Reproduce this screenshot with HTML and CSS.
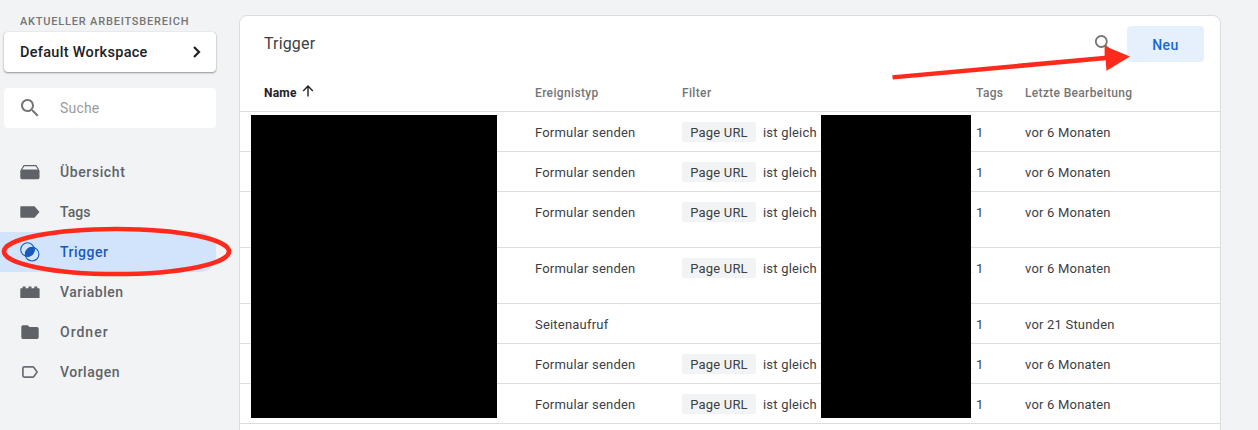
FILE: index.html
```html
<!DOCTYPE html>
<html lang="de">
<head>
<meta charset="utf-8">
<title>Trigger</title>
<link rel="stylesheet" href="styles.css">
</head>
<body>
<div class="app">
  <aside class="sidebar">
    <div class="workspace-label">AKTUELLER ARBEITSBEREICH</div>
    <div class="workspace">
      <span class="workspace-name">Default Workspace</span>
      <svg class="chevron" width="10" height="14" viewBox="0 0 10 14"><path d="M2 2l5 5-5 5" fill="none" stroke="#202124" stroke-width="2.2"/></svg>
    </div>
    <div class="search">
      <svg width="24" height="24" viewBox="0 0 24 24"><path fill="#757575" d="M15.5 14h-.79l-.28-.27C15.41 12.59 16 11.11 16 9.5 16 5.91 13.09 3 9.5 3S3 5.91 3 9.5 5.91 16 9.5 16c1.61 0 3.09-.59 4.23-1.57l.27.28v.79l5 4.99L20.49 19l-4.99-5zm-6 0C7.01 14 5 11.99 5 9.5S7.01 5 9.5 5 14 7.01 14 9.5 11.99 14 9.5 14z"/></svg>
      <span class="search-text">Suche</span>
    </div>
    <nav class="nav">
      <a class="nav-item"><svg class="icon" viewBox="0 0 20 20"><path d="M1.2 8L4 3.6h12L18.8 8" fill="none" stroke="#5f6368" stroke-width="1.1"/><rect x=".3" y="7.6" width="19.2" height="9.6" rx="1.6" fill="#5f6368"/></svg><span class="t-overview">Übersicht</span></a>
      <a class="nav-item"><svg class="icon" viewBox="0 0 20 20"><path d="M1.3 4.3h13.2l5 5.7-5 5.8H1.3a1 1 0 0 1-1-1V5.3a1 1 0 0 1 1-1z" fill="#5f6368"/></svg><span class="t-tags">Tags</span></a>
      <a class="nav-item active"><svg class="icon" viewBox="0 0 20 20"><g fill="none" stroke="#185abc" stroke-width="1.1"><circle cx="7.5" cy="7.6" r="6.8"/><circle cx="12.1" cy="12.2" r="6.8"/></g><path d="M14 5.700A6.800 6.800 0 0 1 5.600 14.100 6.800 6.800 0 0 1 14 5.700z" fill="#185abc" stroke="#185abc" stroke-width="1"/></svg><span class="t-trigger">Trigger</span></a>
      <a class="nav-item"><svg class="icon" viewBox="0 0 20 20"><path d="M1 6.3h1.6V4.5h3v1.8H8.500V4.500h3v1.800h2.800V4.500h3v1.800H19a.6.6 0 0 1 .6.6v8.500a.6.6 0 0 1-.6.6H.9a.6.6 0 0 1-.6-.6V6.900a.6.6 0 0 1 .7-.6z" fill="#5f6368"/></svg><span class="t-vars">Variablen</span></a>
      <a class="nav-item"><svg class="icon" viewBox="0 0 20 20"><path d="M3 3.300h4.800l1.800 1.700H17a1.700 1.700 0 0 1 1.700 1.700v8.500A1.700 1.700 0 0 1 17 16.900H3a1.700 1.700 0 0 1-1.700-1.700V5A1.700 1.700 0 0 1 3 3.300z" fill="#5f6368"/></svg><span class="t-folder">Ordner</span></a>
      <a class="nav-item"><svg class="icon" viewBox="0 0 20 20"><path d="M4.200 4.900h8.300q.9 0 1.400.7l3.200 4.400-3.200 4.400q-.5.700-1.400.7H4.200q-1.300 0-1.300-1.300V6.200q0-1.300 1.300-1.300z" fill="none" stroke="#6b6e76" stroke-width="1.700"/></svg><span class="t-tpl">Vorlagen</span></a>
    </nav>
  </aside>
  <main class="card">
    <header class="card-head">
      <h1 class="title">Trigger</h1>
      <div class="actions">
        <svg width="20" height="20" viewBox="0 0 20 20"><circle cx="8.300" cy="7.500" r="5.500" fill="none" stroke="#757575" stroke-width="1.800"/><path d="M12.200 11.500l5 5" stroke="#757575" stroke-width="2"/></svg>
        <button class="new">Neu</button>
      </div>
    </header>
    <div class="row heading">
      <span class="name">Name <svg class="sort" width="12" height="12" viewBox="0 0 12 12"><path d="M6 11.500V1.300M1.200 5.900L6 1.100l4.800 4.800" fill="none" stroke="#202124" stroke-width="1.400"/></svg></span>
      <span>Ereignistyp</span><span>Filter</span><span>Tags</span><span class="h-date">Letzte Bearbeitung</span>
    </div>
    <div class="row"><span></span><span>Formular senden</span><span class="filter"><b class="chip">Page URL</b>ist gleich<i class="more">…</i></span><span>1</span><span>vor 6 Monaten</span></div>
    <div class="row"><span></span><span>Formular senden</span><span class="filter"><b class="chip">Page URL</b>ist gleich<i class="more">…</i></span><span>1</span><span>vor 6 Monaten</span></div>
    <div class="row tall"><span></span><span>Formular senden</span><span class="filter"><b class="chip">Page URL</b>ist gleich<i class="more">…</i></span><span>1</span><span>vor 6 Monaten</span></div>
    <div class="row tall"><span></span><span>Formular senden</span><span class="filter"><b class="chip">Page URL</b>ist gleich<i class="more">…</i></span><span>1</span><span>vor 6 Monaten</span></div>
    <div class="row"><span></span><span>Seitenaufruf</span><span></span><span>1</span><span>vor 21 Stunden</span></div>
    <div class="row"><span></span><span>Formular senden</span><span class="filter"><b class="chip">Page URL</b>ist gleich<i class="more">…</i></span><span>1</span><span>vor 6 Monaten</span></div>
    <div class="row"><span></span><span>Formular senden</span><span class="filter"><b class="chip">Page URL</b>ist gleich<i class="more">…</i></span><span>1</span><span>vor 6 Monaten</span></div>
    <div class="row"></div>
  </main>
  <div class="redaction redaction-name"></div>
  <div class="redaction redaction-value"></div>
  <svg class="annotations" width="1258" height="430" viewBox="0 0 1258 430">
    <ellipse cx="116.500" cy="251.500" rx="112.500" ry="22.500" fill="none" stroke="#ff2a1c" stroke-width="4.600"/>
    <path d="M892.200 75.200L1104.600 55.700V46L1130 56.600L1106.500 70.800L1105.600 60.300L892.800 79.600z" fill="#ff2a1c"/>
  </svg>
</div>
</body>
</html>
```
FILE: styles.css
```css
* { box-sizing: border-box; }
body { margin: 0; background: #f1f3f4; font-family: Roboto, "Liberation Sans", sans-serif; }
.app { position: relative; display: flex; width: 1258px; height: 430px; overflow: hidden; }
.sidebar { width: 239px; flex: none; padding-top: 15px; }
.workspace-label { margin-left: 20px; height: 14px; line-height: 14px; font-size: 11px; font-weight: 500; letter-spacing: .8px; color: #757575; white-space: nowrap; }
.workspace { margin: 3px 0 0 4px; width: 212px; height: 40px; padding: 0 14px 0 16px; display: flex; align-items: center; justify-content: space-between; background: #fff; border-radius: 4px; box-shadow: 0 1px 2px rgba(0,0,0,.38), 0 0 1px rgba(0,0,0,.2); }
.workspace-name { font-size: 14.5px; font-weight: 500; letter-spacing: .3px; color: #202124; }
.search { margin: 16px 0 0 4px; width: 212px; height: 40px; padding-left: 14px; display: flex; align-items: center; gap: 18px; background: #fff; border-radius: 4px; }
.search-text { font-size: 14px; color: #9a9a9a; letter-spacing: .2px; }
.nav { margin-top: 24px; width: 216px; }
.nav-item { height: 40px; padding-left: 20px; display: flex; align-items: center; gap: 20px; font-size: 14px; font-weight: 500; letter-spacing: .5px; color: #5f6368; }
.t-overview { letter-spacing: .6px; }
.t-tags { letter-spacing: .05px; }
.t-folder { letter-spacing: 1px; }
.active { background: #d2e3fc; color: #185abc; border-radius: 0 16px 16px 0; }
.icon { width: 20px; height: 20px; }
.card { flex: none; margin-top: 15px; width: 982px; height: 440px; background: #fff; border: 1px solid #dadce0; border-radius: 8px; }
.card-head { height: 58px; padding: 10px 16px 0 24px; display: flex; justify-content: space-between; }
.title { margin: 8px 0 0; font-size: 16px; line-height: 20px; font-weight: 400; letter-spacing: .15px; color: #3c4043; }
.actions { display: flex; gap: 14px; }
.actions svg { margin-top: 8px; }
.new { width: 77px; height: 36px; padding: 2px 0 0; border: 0; border-radius: 4px; background: #e6f0fd; color: #1967d2; font: 500 14px Roboto, sans-serif; letter-spacing: .5px; }
.row { height: 40px; padding: 11px 0 0 24px; display: grid; grid-template-columns: 271px 147px 294px 49px 1fr; align-items: start; border-bottom: 1px solid #dadce0; font-size: 13px; line-height: 20px; letter-spacing: .2px; color: #3c4043; white-space: nowrap; }
.tall { height: 56px; }
.heading { height: 38px; font-size: 12px; font-weight: 500; letter-spacing: .35px; color: #757575; padding-top: 9px; }
.name { color: #202124; font-weight: 700; letter-spacing: .2px; }
.h-date { letter-spacing: .33px; }
.sort { margin-left: 2px; }
.filter { display: flex; gap: 7px; margin-right: 4px; }
.more { margin-left: auto; font-style: normal; letter-spacing: 0; }
.chip { width: 74px; height: 20px; margin-top: -1px; line-height: 22px; text-align: center; font-weight: 400; background: #f1f3f4; border-radius: 2px; }
.redaction { position: absolute; top: 115px; height: 303px; background: #000; }
.redaction-name { left: 251px; width: 246px; }
.redaction-value { left: 821px; width: 150px; }
.annotations { position: absolute; inset: 0; }
```
